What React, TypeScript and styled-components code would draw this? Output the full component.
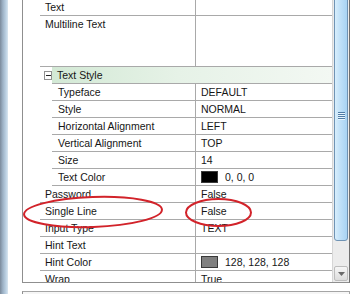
import React from "react";
import styled, { createGlobalStyle } from "styled-components";

const Global = createGlobalStyle`
  html, body { margin: 0; padding: 0; background: #fff; }
  body { font-family: "Liberation Sans", Arial, sans-serif; }
`;

const Page = styled.div`
  position: relative;
  width: 364px;
  height: 294px;
  overflow: hidden;
  display: flex;
  background: #fff;
`;

const WindowEdge = styled.div`
  width: 8px;
  flex: none;
  background: linear-gradient(to right, #7b8a9b 0%, #9cb1c5 35%, #bcd1e3 75%, #d9e6f0 100%);
`;

const Client = styled.div`
  flex: 1;
  display: flex;
  flex-direction: column;
  padding: 0 14px;
  min-width: 0;
`;

const GridFrame = styled.div`
  height: 283px;
  flex: none;
  box-sizing: border-box;
  border-left: 1px solid #8f8f8f;
  border-right: 1px solid #6f6f6f;
  border-bottom: 1px solid #8f8f8f;
  display: flex;
  overflow: hidden;
`;

const Viewport = styled.div`
  width: 309px;
  flex: none;
  overflow: hidden;
`;

const Rows = styled.div`
  margin-top: -1px;
  display: flex;
  flex-direction: column;
`;

const Row = styled.div<{ $lines?: number }>`
  display: flex;
  height: ${(p) => 17 * (p.$lines || 1)}px;
  flex: none;
`;

const Gutter = styled.div<{ $w: number }>`
  width: ${(p) => p.$w}px;
  flex: none;
  display: flex;
  align-items: center;
  box-sizing: border-box;
`;

const CategoryGutter = styled(Gutter)`
  padding-left: 21px;
`;

const Body = styled.div`
  flex: 1;
  min-width: 0;
  display: flex;
  border-bottom: 1px solid #a9a9a9;
`;

const CategoryBody = styled(Body)`
  background: linear-gradient(to right, #d3e9d5 0%, #e6f2e7 45%, #f3f8f3 100%);
`;

const Label = styled.div<{ $w: number; $pad: number }>`
  width: ${(p) => p.$w}px;
  flex: none;
  box-sizing: border-box;
  padding-left: ${(p) => p.$pad}px;
  font-size: 10.5px;
  line-height: 16px;
  color: #161616;
  white-space: nowrap;
  overflow: hidden;
`;

const CategoryLabel = styled.div`
  padding-left: 5px;
  font-size: 10.5px;
  line-height: 16px;
  color: #161616;
  white-space: nowrap;
`;

const Value = styled.div`
  flex: 1;
  min-width: 0;
  border-left: 1px solid #a9a9a9;
  padding-left: 5px;
  display: flex;
  align-items: flex-start;
  gap: 7px;
  font-size: 10.5px;
  line-height: 16px;
  color: #161616;
  white-space: nowrap;
`;

const Swatch = styled.span<{ $color: string }>`
  display: block;
  width: 17px;
  height: 12px;
  margin-top: 2px;
  box-sizing: border-box;
  background: ${(p) => p.$color};
  border: 1px solid #3a3a3a;
  flex: none;
`;

const Toggle = styled.div`
  width: 9px;
  height: 9px;
  box-sizing: border-box;
  border: 1px solid #919191;
  background: #fff;
  display: flex;
  align-items: center;
  justify-content: center;
  &::after {
    content: "";
    width: 5px;
    height: 1px;
    background: #222;
  }
`;

const ScrollBar = styled.div`
  width: 17px;
  flex: none;
  box-sizing: border-box;
  border-left: 1px solid #d6d6d6;
  background: #ececec;
  display: flex;
  flex-direction: column;
`;

const Thumb = styled.div`
  height: 247px;
  flex: none;
  margin: -6px 1px 0 1px;
  box-sizing: border-box;
  border: 1px solid #6f93b4;
  border-radius: 0 0 3px 3px;
  background: linear-gradient(to right, #d8eefc 0%, #bfe0f8 45%, #a8d3f3 100%);
  display: flex;
  align-items: center;
  justify-content: center;
`;

const Grip = styled.div`
  width: 7px;
  height: 8px;
  margin-top: -4px;
  background: repeating-linear-gradient(to bottom, #4f7ca6 0 1px, #e8f5fe 1px 2px);
`;

const Track = styled.div`
  flex: 1;
`;

const ArrowButton = styled.div`
  height: 15px;
  flex: none;
  margin: 0 1px 1px 1px;
  box-sizing: border-box;
  border: 1px solid #bdbdbd;
  border-radius: 2px;
  background: linear-gradient(#f6f6f6, #dcdcdc);
  display: flex;
  align-items: center;
  justify-content: center;
`;

const HelpPanel = styled.div`
  margin-top: 8px;
  flex: 1;
  border-top: 1px solid #a5a5a5;
  border-left: 1px solid #8f8f8f;
  border-right: 1px solid #a5a5a5;
  background: #f6f6f6;
`;

const Annotations = styled.svg`
  position: absolute;
  left: 0;
  top: 0;
  pointer-events: none;
`;

type Prop = {
  label: string;
  value?: string;
  swatch?: string;
  nested?: boolean;
  lines?: number;
};

const ROW_START = 172;

function PropRow({ label, value, swatch, nested, lines }: Prop) {
  const indent = nested ? 29 : 17;
  return (
    <Row $lines={lines}>
      <Gutter $w={indent} />
      <Body>
        <Label $w={ROW_START - indent} $pad={nested ? 6 : 5}>
          {label}
        </Label>
        <Value>
          {swatch && <Swatch $color={swatch} />}
          {value}
        </Value>
      </Body>
    </Row>
  );
}

const top1: Prop[] = [
  { label: "Text", value: "" },
  { label: "Multiline Text", value: "", lines: 3 },
];

const nested: Prop[] = [
  { label: "Typeface", value: "DEFAULT" },
  { label: "Style", value: "NORMAL" },
  { label: "Horizontal Alignment", value: "LEFT" },
  { label: "Vertical Alignment", value: "TOP" },
  { label: "Size", value: "14" },
  { label: "Text Color", value: "0, 0, 0", swatch: "#000" },
];

const top2: Prop[] = [
  { label: "Password", value: "False" },
  { label: "Single Line", value: "False" },
  { label: "Input Type", value: "TEXT" },
  { label: "Hint Text", value: "" },
  { label: "Hint Color", value: "128, 128, 128", swatch: "#808080" },
  { label: "Wrap", value: "True" },
];

export default function App() {
  return (
    <>
      <Global />
      <Page>
        <WindowEdge />
        <Client>
          <GridFrame>
            <Viewport>
              <Rows>
                {top1.map((p) => (
                  <PropRow key={p.label} {...p} />
                ))}
                <Row>
                  <CategoryGutter $w={29}>
                    <Toggle />
                  </CategoryGutter>
                  <CategoryBody>
                    <CategoryLabel>Text Style</CategoryLabel>
                  </CategoryBody>
                </Row>
                {nested.map((p) => (
                  <PropRow key={p.label} {...p} nested />
                ))}
                {top2.map((p) => (
                  <PropRow key={p.label} {...p} />
                ))}
              </Rows>
            </Viewport>
            <ScrollBar>
              <Thumb>
                <Grip />
              </Thumb>
              <Track />
              <ArrowButton>
                <svg width="7" height="4" viewBox="0 0 7 4">
                  <path d="M0 0 H7 L3.5 4 Z" fill="#6a6a6a" />
                </svg>
              </ArrowButton>
            </ScrollBar>
          </GridFrame>
          <HelpPanel />
        </Client>
        <Annotations width="364" height="294" viewBox="0 0 364 294">
          <ellipse cx="93" cy="212" rx="69" ry="15" transform="rotate(-2 93 212)" fill="none" stroke="#d2232a" strokeWidth="2" />
          <ellipse cx="218.5" cy="212.5" rx="32.5" ry="13.5" fill="none" stroke="#d2232a" strokeWidth="2" />
        </Annotations>
      </Page>
    </>
  );
}
